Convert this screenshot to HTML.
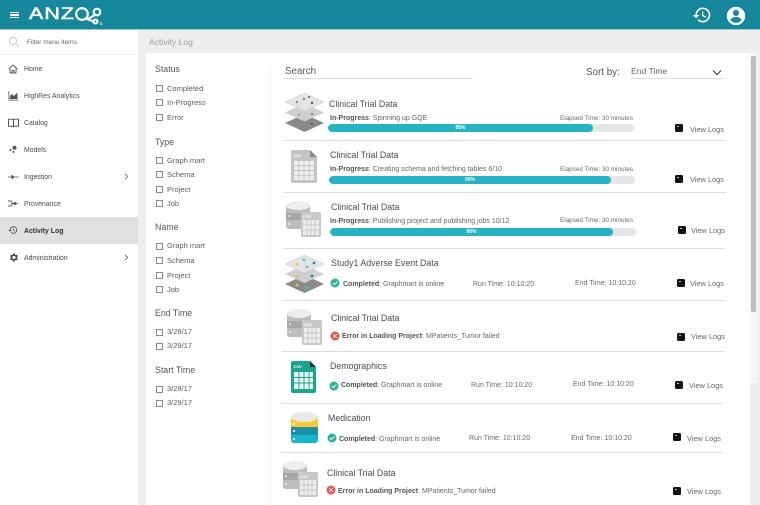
<!DOCTYPE html>
<html><head><meta charset="utf-8"><style>
html,body{margin:0;padding:0}
body{width:760px;height:505px;overflow:hidden;background:#eeeeee;position:relative;font-family:"Liberation Sans",sans-serif;color:#555}
.a,.t{position:absolute;white-space:nowrap}
.t{line-height:12px}
.nav{font-size:6.9px;color:#4a4a4a;left:24px}
.fh{font-size:8.8px;color:#555;left:155px}
.fi{font-size:7.5px;color:#5c5c5c;left:167px}
.cb{position:absolute;left:155.7px;width:5.6px;height:5.6px;border:1px solid #888;background:#fff}
.title{font-size:8.8px;color:#4c4c4c}
.st{font-size:7px;color:#666}
.st b{color:#555}
.sm{font-size:6.35px;color:#6a6a6a}
.vl{font-size:7.4px;color:#666}
.hr{position:absolute;height:1px;background:#dcdcdc}
.bar{position:absolute;height:8px;background:#e6e6e6;border-radius:4px;overflow:hidden}
.bar i{position:absolute;left:0;top:0;bottom:0;background:#26b3c4;border-radius:4px;color:#fff;font:bold 5px/8px "Liberation Sans",sans-serif;text-align:center}
.term{position:absolute;width:8px;height:8px;background:#111;border-radius:1.5px}
.term:after{content:"";position:absolute;left:1.5px;top:1.5px;width:2px;height:1px;background:#bbb}
svg{position:absolute;overflow:visible}
</style></head><body>
<!-- header -->
<div class="a" style="left:0;top:0;width:760px;height:29px;background:#17879b;border-bottom:1px solid #9fc9d1"></div>
<div class="a" style="left:10px;top:12px;width:9px;height:1.4px;background:#fff"></div>
<div class="a" style="left:10px;top:14.4px;width:9px;height:1.4px;background:#fff"></div>
<div class="a" style="left:10px;top:16.8px;width:9px;height:1.4px;background:#fff"></div>
<div class="t" style="left:29px;top:6px;font-size:16.5px;line-height:17px;color:#fff;letter-spacing:.8px;transform:scaleX(1.3);transform-origin:0 0;-webkit-text-stroke:.5px #fff">ANZ</div>
<svg style="left:0;top:0" width="120" height="29" fill="none" stroke="#fff" stroke-width="2.100"><circle cx="82" cy="14" r="5.800"/><circle cx="97" cy="12" r="3.300"/><circle cx="95.500" cy="21.500" r="2"/><path d="M85.500 18.500l8 3M95 14.800l-6.500 4"/><circle cx="101" cy="23.500" r="1" stroke-width=".6"/></svg>
<svg style="left:692px;top:5px" width="20" height="20" viewBox="0 0 24 24" fill="#fff"><path d="M13 3a9 9 0 0 0-9 9H1l3.900 3.900L9 12H6a7 7 0 1 1 2.050 4.950L6.630 18.400A9 9 0 1 0 13 3zm-1 5v5l4.300 2.500.7-1.200-3.500-2.100V8z"/></svg>
<svg style="left:725px;top:4.500px" width="22" height="22" viewBox="0 0 24 24" fill="#fff"><path d="M12 2a10 10 0 1 0 0 20 10 10 0 0 0 0-20zm0 3.200a3.400 3.400 0 1 1 0 6.800 3.400 3.400 0 0 1 0-6.800zm0 14.200a7.200 7.200 0 0 1-6-3.200c0-2 4-3.100 6-3.100s6 1.100 6 3.100a7.200 7.200 0 0 1-6 3.200z"/></svg>

<!-- sidebar -->
<div class="a" style="left:0;top:30px;width:138px;height:475px;background:#fff"></div>
<div class="a" style="left:0;top:54px;width:138px;height:1px;background:#f0f0f0"></div>
<div class="a" style="left:0;top:217px;width:138px;height:27px;background:#e0e0e0"></div>
<svg style="left:8px;top:36px" width="12" height="12" fill="none" stroke="#c8c8c8" stroke-width="1"><circle cx="5" cy="5" r="3.600"/><path d="M7.600 7.600l3.600 3.600"/></svg>
<div class="t" style="left:27px;top:37px;font-size:6.500px;color:#666">Filter menu items</div>

<svg style="left:8px;top:64px" width="10" height="10" fill="none" stroke="#555" stroke-width=".9"><path d="M.8 5L5 1l4.200 4M2 4.500V9h6V4.500M4 9V6.500h2V9"/></svg>
<div class="t nav" style="top:64px">Home</div>
<svg style="left:8px;top:91px" width="11" height="10" fill="#555"><path d="M.5 0v9.500h10v-.8H1.300V0z"/><path d="M2 8V5l2-2 1.500 2 2-1.500 2-1.500V8z"/></svg>
<div class="t nav" style="top:91px">HighRes Analytics</div>
<svg style="left:8px;top:118px" width="11" height="10" fill="none" stroke="#444" stroke-width=".9"><path d="M.5 1.200h3.500q1.500 0 1.500 1v7q0-1-1.500-1H.5zM10.500 1.200H7q-1.500 0-1.500 1v7q0-1 1.500-1h3.500z"/></svg>
<div class="t nav" style="top:118px">Catalog</div>
<svg style="left:9px;top:145px" width="9" height="9" fill="#555"><circle cx="5.500" cy="2.800" r="2"/><circle cx="1.500" cy="5" r="1"/><circle cx="4.500" cy="7" r="1"/></svg>
<div class="t nav" style="top:145px">Models</div>
<svg style="left:8px;top:173px" width="11" height="8" fill="none" stroke="#555"><path d="M0 4h4M7 4h4" stroke-width=".8"/><path d="M3.500 1.500L7 4 3.500 6.500z" fill="#555" stroke="none"/></svg>
<div class="t nav" style="top:172px">Ingestion</div>
<svg style="left:124px;top:173px" width="5" height="7" fill="none" stroke="#666" stroke-width=".9"><path d="M1 .8L3.600 3.500 1 6.200"/></svg>
<svg style="left:8px;top:200px" width="11" height="7" fill="none" stroke="#555" stroke-width=".9"><path d="M0 1h3l1 1v3l-1 1H0M3.500 3.500h6"/><circle cx="7" cy="3.500" r="1" fill="#555"/></svg>
<div class="t nav" style="top:199px">Provenance</div>
<svg style="left:8px;top:225px" width="10" height="10" viewBox="0 0 24 24" fill="#444"><path d="M13 3a9 9 0 0 0-9 9H1l3.900 3.900L9 12H6a7 7 0 1 1 2.050 4.950L6.630 18.400A9 9 0 1 0 13 3zm-1 5v5l4.300 2.500.7-1.200-3.500-2.100V8z"/></svg>
<div class="t nav" style="top:226px;font-weight:bold;color:#333">Activity Log</div>
<svg style="left:8px;top:252px" width="11" height="11" viewBox="0 0 24 24" fill="#444"><path d="M19.400 13a7.500 7.500 0 0 0 0-2l2.100-1.600-2-3.500-2.500 1a7.500 7.500 0 0 0-1.700-1L15 3.300h-4l-.4 2.600a7.500 7.500 0 0 0-1.700 1l-2.500-1-2 3.500L6.500 11a7.500 7.500 0 0 0 0 2l-2.100 1.600 2 3.500 2.500-1a7.500 7.500 0 0 0 1.700 1l.4 2.600h4l.4-2.600a7.500 7.500 0 0 0 1.700-1l2.500 1 2-3.500zM13 15.500a3.500 3.500 0 1 1 0-7 3.500 3.500 0 0 1 0 7z"/></svg>
<div class="t nav" style="top:253px">Administration</div>
<svg style="left:124px;top:254px" width="5" height="7" fill="none" stroke="#666" stroke-width=".9"><path d="M1 .8L3.600 3.500 1 6.200"/></svg>

<!-- content -->
<div class="t" style="left:149px;top:36px;font-size:8.600px;color:#9a9a9a">Activity Log</div>
<div class="a" style="left:146px;top:53px;width:604px;height:452px;background:#fff"></div>
<div class="a" style="left:270px;top:66px;width:1px;height:439px;background:#f2f2f2"></div>
<div class="a" style="left:750px;top:53px;width:7px;height:330px;background:#f6f6f6"></div>
<div class="a" style="left:751px;top:56px;width:5px;height:256px;background:#bdbdbd;border-radius:2px"></div>

<!-- filters -->
<div class="t fh" style="top:63px">Status</div>
<div class="cb" style="top:84.500px"></div><div class="t fi" style="top:83px">Completed</div>
<div class="cb" style="top:98.500px"></div><div class="t fi" style="top:97px">In-Progress</div>
<div class="cb" style="top:113.500px"></div><div class="t fi" style="top:112px">Error</div>
<div class="t fh" style="top:136px">Type</div>
<div class="cb" style="top:156.500px"></div><div class="t fi" style="top:155px">Graph mart</div>
<div class="cb" style="top:170.500px"></div><div class="t fi" style="top:169px">Schema</div>
<div class="cb" style="top:185.500px"></div><div class="t fi" style="top:184px">Project</div>
<div class="cb" style="top:199.500px"></div><div class="t fi" style="top:198px">Job</div>
<div class="t fh" style="top:221px">Name</div>
<div class="cb" style="top:242.500px"></div><div class="t fi" style="top:240px">Graph mart</div>
<div class="cb" style="top:256.500px"></div><div class="t fi" style="top:255px">Schema</div>
<div class="cb" style="top:271.500px"></div><div class="t fi" style="top:270px">Project</div>
<div class="cb" style="top:285.500px"></div><div class="t fi" style="top:284px">Job</div>
<div class="t fh" style="top:307px">End Time</div>
<div class="cb" style="top:328.500px"></div><div class="t fi" style="top:326px">3/28/17</div>
<div class="cb" style="top:342.500px"></div><div class="t fi" style="top:340px">3/29/17</div>
<div class="t fh" style="top:364px">Start Time</div>
<div class="cb" style="top:385.500px"></div><div class="t fi" style="top:383px">3/28/17</div>
<div class="cb" style="top:399.500px"></div><div class="t fi" style="top:397px">3/29/17</div>

<!-- search/sort -->
<div class="t" style="left:285px;top:66px;font-size:9.800px;color:#555">Search</div>
<div class="a" style="left:284px;top:78px;width:189px;height:1px;background:#ddd"></div>
<div class="t" style="left:586px;top:67px;font-size:9.800px;color:#555">Sort by:</div>
<div class="t" style="left:631px;top:65px;font-size:8.600px;color:#666">End Time</div>
<div class="a" style="left:631px;top:78px;width:92px;height:1px;background:#ddd"></div>
<svg style="left:712px;top:69px" width="10" height="7" fill="none" stroke="#444" stroke-width="1.200"><path d="M1 1.500l4 4 4-4"/></svg>

<!-- dividers -->
<div class="hr" style="left:284px;top:140px;width:442px"></div>
<div class="hr" style="left:284px;top:192px;width:442px"></div>
<div class="hr" style="left:283px;top:248px;width:442px"></div>
<div class="hr" style="left:282px;top:300px;width:443px"></div>
<div class="hr" style="left:282px;top:351px;width:442px"></div>
<div class="hr" style="left:281px;top:403px;width:442px"></div>
<div class="hr" style="left:280px;top:452px;width:443px"></div>

<!-- row 1 -->
<svg style="left:285px;top:93px" width="40" height="40"><path d="M19.500 21l19.500 9-19.500 9-19.500-9z" fill="#8a8a8a"/><path d="M19.500 10.500l19.500 9-19.500 9-19.500-9z" fill="#cfcfcf"/><path d="M19.500 0l19.500 9-19.500 9-19.500-9z" fill="#e4e4e4" stroke="#ccc" stroke-width=".5"/><circle cx="12" cy="9" r="1.200" fill="#888"/><circle cx="19" cy="6" r="1.200" fill="#888"/><circle cx="27" cy="10" r="1.200" fill="#555"/><circle cx="24" cy="4" r="1" fill="#555"/><circle cx="14" cy="22" r="1" fill="#888"/><circle cx="27" cy="21" r="1" fill="#666"/><circle cx="27" cy="31" r="1" fill="#444"/></svg>
<div class="t title" style="left:329px;top:98px">Clinical Trial Data</div>
<div class="t st" style="left:330px;top:113px"><b>In-Progress</b>: Spinning up GQE</div>
<div class="t sm" style="left:560px;top:113px">Elapsed Time: 30 minutes</div>
<div class="bar" style="left:328px;top:124px;width:306px"><i style="width:265px">85%</i></div>
<div class="term" style="left:675px;top:124px"></div><div class="t vl" style="left:690px;top:124px">View Logs</div>

<!-- row 2 -->
<svg style="left:291px;top:150px" width="26" height="33"><path d="M2 0h17l7 7v24q0 2-2 2H2q-2 0-2-2V2q0-2 2-2z" fill="#c4c4c4"/><path d="M19 0l7 7h-7z" fill="#888"/><text x="2.500" y="7" font-size="4" fill="#fff" font-family="Liberation Sans" font-weight="bold">CSV</text><rect x="3" y="11" width="20" height="19" fill="#eee"/><path d="M3 15.800h20M3 20.500h20M3 25.200h20M8 11v19M13 11v19M18 11v19" stroke="#c4c4c4"/></svg>
<div class="t title" style="left:330px;top:149px">Clinical Trial Data</div>
<div class="t st" style="left:330px;top:164px"><b>In-Progress</b>: Creating schema and fetching tables 6/10</div>
<div class="t sm" style="left:560px;top:164px">Elapsed Time: 30 minutes</div>
<div class="bar" style="left:329px;top:176px;width:306px"><i style="width:282px">90%</i></div>
<div class="term" style="left:675px;top:175px"></div><div class="t vl" style="left:690px;top:174px">View Logs</div>

<!-- row 3 -->
<svg style="left:286px;top:201px" width="36" height="37"><rect x="0" y="3" width="24" height="25" rx="3" fill="#bdbdbd"/><rect x="0" y="12" width="24" height="7" fill="#a6a6a6"/><ellipse cx="12" cy="4.500" rx="12" ry="4.500" fill="#eee"/><circle cx="3" cy="15" r=".9" fill="#fff"/><circle cx="3" cy="23" r=".9" fill="#fff"/><rect x="15" y="11" width="20" height="25" rx="2" fill="#c8c8c8"/><text x="17" y="17" font-size="4" fill="#fff" font-family="Liberation Sans" font-weight="bold">CSV</text><rect x="17" y="19" width="16" height="15" fill="#eee"/><path d="M17 24h16M17 29h16M21 19v15M25 19v15M29 19v15" stroke="#c8c8c8"/></svg>
<div class="t title" style="left:331px;top:201px">Clinical Trial Data</div>
<div class="t st" style="left:330px;top:216px"><b>In-Progress</b>: Publishing project and publishing jobs 10/12</div>
<div class="t sm" style="left:560px;top:215px">Elapsed Time: 30 minutes</div>
<div class="bar" style="left:330px;top:228px;width:306px"><i style="width:283px">90%</i></div>
<div class="term" style="left:678px;top:226px"></div><div class="t vl" style="left:691px;top:225px">View Logs</div>

<!-- row 4 -->
<svg style="left:285px;top:255px" width="40" height="40"><path d="M19.500 20l19.500 9-19.500 9-19.500-9z" fill="#8a8a8a"/><path d="M19.500 10l19.500 9-19.500 9-19.500-9z" fill="#cfcfcf"/><path d="M19.500 0l19.500 9-19.500 9-19.500-9z" fill="#e4e4e4" stroke="#ccc" stroke-width=".5"/><circle cx="12" cy="9" r="1.400" fill="#f2c432"/><circle cx="19" cy="5" r="1.400" fill="#4fc3d6"/><circle cx="29" cy="8" r="1.400" fill="#1f8aa0"/><circle cx="22" cy="12" r="1.400" fill="#4fc3d6"/><circle cx="12" cy="21" r="1.400" fill="#f2c432"/><circle cx="27" cy="21" r="1.400" fill="#1f8aa0"/><circle cx="12" cy="30" r="1.400" fill="#f2c432"/><circle cx="22" cy="33" r="1.400" fill="#4fc3d6"/></svg>
<div class="t title" style="left:331px;top:257px">Study1 Adverse Event Data</div>
<svg style="left:330px;top:278px" width="10" height="10"><circle cx="5" cy="5" r="4.500" fill="#2bb39a"/><path d="M2.800 5l1.600 1.600 3-3" fill="none" stroke="#fff" stroke-width="1"/></svg>
<div class="t st" style="left:343px;top:279px"><b>Completed</b>: Graphmart is online</div>
<div class="t sm" style="left:473px;top:279px;font-size:7px">Run Time: 10:10:20</div>
<div class="t sm" style="left:575px;top:278px;font-size:7px">End Time: 10:10:20</div>
<div class="term" style="left:677px;top:279px"></div><div class="t vl" style="left:690px;top:278px">View Logs</div>

<!-- row 5 -->
<svg style="left:287px;top:309px" width="36" height="38"><rect x="0" y="3" width="24" height="25" rx="3" fill="#bdbdbd"/><rect x="0" y="12" width="24" height="7" fill="#a6a6a6"/><ellipse cx="12" cy="4.500" rx="12" ry="4.500" fill="#eee"/><circle cx="3" cy="15" r=".9" fill="#fff"/><circle cx="3" cy="23" r=".9" fill="#fff"/><rect x="15" y="11" width="20" height="25" rx="2" fill="#c8c8c8"/><text x="17" y="17" font-size="4" fill="#fff" font-family="Liberation Sans" font-weight="bold">CSV</text><rect x="17" y="19" width="16" height="15" fill="#eee"/><path d="M17 24h16M17 29h16M21 19v15M25 19v15M29 19v15" stroke="#c8c8c8"/></svg>
<div class="t title" style="left:331px;top:312px">Clinical Trial Data</div>
<svg style="left:330px;top:331px" width="10" height="10"><circle cx="5" cy="5" r="4.500" fill="#ea5455"/><path d="M3.200 3.200l3.600 3.600M6.800 3.200l-3.600 3.600" stroke="#fff" stroke-width=".8"/></svg>
<div class="t st" style="left:342px;top:331px"><b>Error in Loading Project</b>: MPatients_Tumor failed</div>
<div class="term" style="left:677px;top:333px"></div><div class="t vl" style="left:691px;top:331px">View Logs</div>

<!-- row 6 -->
<svg style="left:291px;top:361px" width="25" height="32"><path d="M2 0h17l6 6v24q0 2-2 2H2q-2 0-2-2V2q0-2 2-2z" fill="#1aa58c"/><path d="M19 0l6 6h-6z" fill="#333"/><text x="2.500" y="7" font-size="4" fill="#fff" font-family="Liberation Sans" font-weight="bold">CSV</text><rect x="3" y="11" width="19" height="17" fill="#eafaf6"/><path d="M3 16.500h19M3 22h19M8 11v17M13 11v17M18 11v17" stroke="#1aa58c"/></svg>
<div class="t title" style="left:330px;top:360px">Demographics</div>
<svg style="left:329px;top:381px" width="10" height="10"><circle cx="5" cy="5" r="4.500" fill="#2bb39a"/><path d="M2.800 5l1.600 1.600 3-3" fill="none" stroke="#fff" stroke-width="1"/></svg>
<div class="t st" style="left:341px;top:380px"><b>Completed</b>: Graphmart is online</div>
<div class="t sm" style="left:471px;top:380px;font-size:7px">Run Time: 10:10:20</div>
<div class="t sm" style="left:573px;top:379px;font-size:7px">End Time: 10:10:20</div>
<div class="term" style="left:675px;top:381px"></div><div class="t vl" style="left:689px;top:380px">View Logs</div>

<!-- row 7 -->
<svg style="left:291px;top:412px" width="27" height="31"><rect x="0" y="3" width="27" height="28" rx="3" fill="#17b6d0"/><rect x="0" y="15" width="27" height="8" fill="#1a8fa6"/><rect x="0" y="6" width="27" height="9" fill="#f8c935"/><ellipse cx="13.500" cy="5" rx="13.500" ry="5" fill="#e9e9e9"/><circle cx="3" cy="12" r="1" fill="#fff"/><circle cx="3" cy="19" r="1" fill="#fff"/><circle cx="3" cy="27" r="1" fill="#fff"/></svg>
<div class="t title" style="left:328px;top:412px">Medication</div>
<svg style="left:327px;top:433px" width="10" height="10"><circle cx="5" cy="5" r="4.500" fill="#2bb39a"/><path d="M2.800 5l1.600 1.600 3-3" fill="none" stroke="#fff" stroke-width="1"/></svg>
<div class="t st" style="left:339px;top:434px"><b>Completed</b>: Graphmart is online</div>
<div class="t sm" style="left:469px;top:433px;font-size:7px">Run Time: 10:10:20</div>
<div class="t sm" style="left:571px;top:433px;font-size:7px">End Time: 10:10:20</div>
<div class="term" style="left:673px;top:433px"></div><div class="t vl" style="left:687px;top:433px">View Logs</div>

<!-- row 8 -->
<svg style="left:283px;top:461px" width="36" height="38"><rect x="0" y="3" width="24" height="25" rx="3" fill="#bdbdbd"/><rect x="0" y="12" width="24" height="7" fill="#a6a6a6"/><ellipse cx="12" cy="4.500" rx="12" ry="4.500" fill="#eee"/><circle cx="3" cy="15" r=".9" fill="#fff"/><circle cx="3" cy="23" r=".9" fill="#fff"/><rect x="15" y="11" width="20" height="25" rx="2" fill="#c8c8c8"/><text x="17" y="17" font-size="4" fill="#fff" font-family="Liberation Sans" font-weight="bold">CSV</text><rect x="17" y="19" width="16" height="15" fill="#eee"/><path d="M17 24h16M17 29h16M21 19v15M25 19v15M29 19v15" stroke="#c8c8c8"/></svg>
<div class="t title" style="left:327px;top:467px">Clinical Trial Data</div>
<svg style="left:326px;top:485px" width="10" height="10"><circle cx="5" cy="5" r="4.500" fill="#ea5455"/><path d="M3.200 3.200l3.600 3.600M6.800 3.200l-3.600 3.600" stroke="#fff" stroke-width=".8"/></svg>
<div class="t st" style="left:338px;top:486px"><b>Error in Loading Project</b>: MPatients_Tumor failed</div>
<div class="term" style="left:673px;top:487px"></div><div class="t vl" style="left:687px;top:486px">View Logs</div>
</body></html>
